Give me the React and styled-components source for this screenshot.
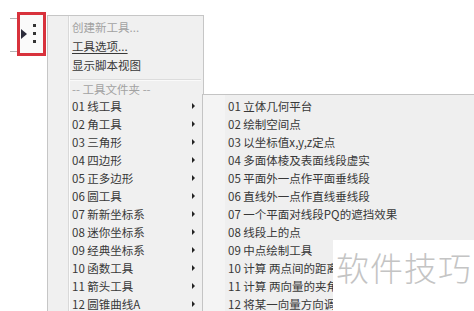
import React from 'react'
import styled, { createGlobalStyle } from 'styled-components'

const GlobalStyle = createGlobalStyle`
	html, body {
		margin: 0;
		padding: 0;
		background: #fff;
	}
	body {
		font-family: "Noto Sans CJK SC", "Noto Sans", "Liberation Sans", sans-serif;
	}
`

export const Screen = styled.div`
	position: relative;
	display: flex;
	flex-direction: row;
	align-items: flex-start;
	width: 474px;
	height: 311px;
	overflow: hidden;
	background: #fff;
`

export const Toolbar = styled.div`
	width: 47px;
	flex: none;
`

export const Rail = styled.div`
	display: flex;
	justify-content: flex-end;
	margin: 18px 0 0 10px;
	width: 36px;
	height: 32px;
	border-top: 1px solid #b4b4b4;
	border-bottom: 1px solid #b4b4b4;
`

export const Highlight = styled.div`
	display: flex;
	align-items: center;
	gap: 6px;
	box-sizing: border-box;
	width: 29px;
	height: 44px;
	margin: -7px 0;
	border: 3px solid #d8323c;
	background: #fafafa;
`

export const Triangle = styled.div`
	width: 0;
	height: 0;
	margin-left: 1px;
	border-left: 6px solid #2c2c3a;
	border-top: 5px solid transparent;
	border-bottom: 5px solid transparent;
`

export const Dots = styled.div`
	display: flex;
	flex-direction: column;
	gap: 5px;
	margin-top: -1px;
`

export const Dot = styled.span`
	width: 3px;
	height: 3px;
	background: #333;
`

export const Menu = styled.div`
	flex: none;
	box-sizing: border-box;
	width: 157px;
	height: 300px;
	margin-top: 15px;
	padding-top: 1px;
	border: 1px solid #c6c6c6;
	border-bottom: none;
	background: linear-gradient(to right, #f0f0f0 20px, #d9d9d9 20px, #d9d9d9 21px, #fbfbfb 21px, #fbfbfb 22px, #f0f0f0 22px);
`

export const Row = styled.div`
	display: flex;
	align-items: center;
	justify-content: space-between;
	height: ${props => props.h || 18}px;
	padding: 0 8px 0 24px;
	font-size: 11.5px;
	color: ${props => props.muted ? '#a2a2a2' : '#383838'};
	white-space: nowrap;
`

export const Label = styled.span`
	text-decoration: ${props => props.underline ? 'underline' : 'none'};
	text-underline-offset: 2px;
`

export const Separator = styled.div`
	height: 1px;
	margin: 6px 2px 0 22px;
	background: #dcdcdc;
	border-bottom: 1px solid #fafafa;
`

export const Arrow = styled.span`
	width: 0;
	height: 0;
	border-left: 3px solid #222;
	border-top: 3px solid transparent;
	border-bottom: 3px solid transparent;
`

export const SubMenu = styled.div`
	flex: 1;
	box-sizing: border-box;
	height: 220px;
	margin: 94px 0 0 -2px;
	padding-top: 2px;
	border-top: 1px solid #c4c4c4;
	border-left: 1px solid #c4c4c4;
	background: linear-gradient(to right, #f4f4f4 22px, #efefef 22px);
`

export const SubRow = styled(Row)`
	padding-left: 25px;
`

export const Watermark = styled.div`
	position: absolute;
	left: 333px;
	top: 240px;
	right: 0;
	bottom: 0;
	padding: 3px 0 0 3px;
	background: #fff;
	font-size: 33px;
	letter-spacing: 1px;
	color: #c4c4c4;
	font-weight: 300;
`

const tools = [
	'01 线工具', '02 角工具', '03 三角形', '04 四边形', '05 正多边形', '06 圆工具',
	'07 新新坐标系', '08 迷你坐标系', '09 经典坐标系', '10 函数工具', '11 箭头工具', '12 圆锥曲线A'
]

const solids = [
	'01 立体几何平台', '02 绘制空间点', '03 以坐标值x,y,z定点', '04 多面体棱及表面线段虚实',
	'05 平面外一点作平面垂线段', '06 直线外一点作直线垂线段', '07 一个平面对线段PQ的遮挡效果',
	'08 线段上的点', '09 中点绘制工具', '10 计算  两点间的距离', '11 计算  两向量的夹角',
	'12 将某一向量方向调整'
]

const App = () => {
	return (
		<Screen>
			<GlobalStyle />
			<Toolbar>
				<Rail>
					<Highlight>
						<Triangle />
						<Dots>
							<Dot />
							<Dot />
							<Dot />
						</Dots>
					</Highlight>
				</Rail>
			</Toolbar>
			<Menu>
				<Row h={19} muted><Label>创建新工具...</Label></Row>
				<Row h={20}><Label underline>工具选项...</Label></Row>
				<Row h={17}><Label>显示脚本视图</Label></Row>
				<Separator />
				<Row h={16} muted><Label>-- 工具文件夹 --</Label></Row>
				{tools.map(t => (
					<Row key={t}>
						<Label>{t}</Label>
						<Arrow />
					</Row>
				))}
			</Menu>
			<SubMenu>
				{solids.map(s => (
					<SubRow key={s}>
						<Label>{s}</Label>
					</SubRow>
				))}
			</SubMenu>
			<Watermark>软件技巧</Watermark>
		</Screen>
	)
}

export default App
